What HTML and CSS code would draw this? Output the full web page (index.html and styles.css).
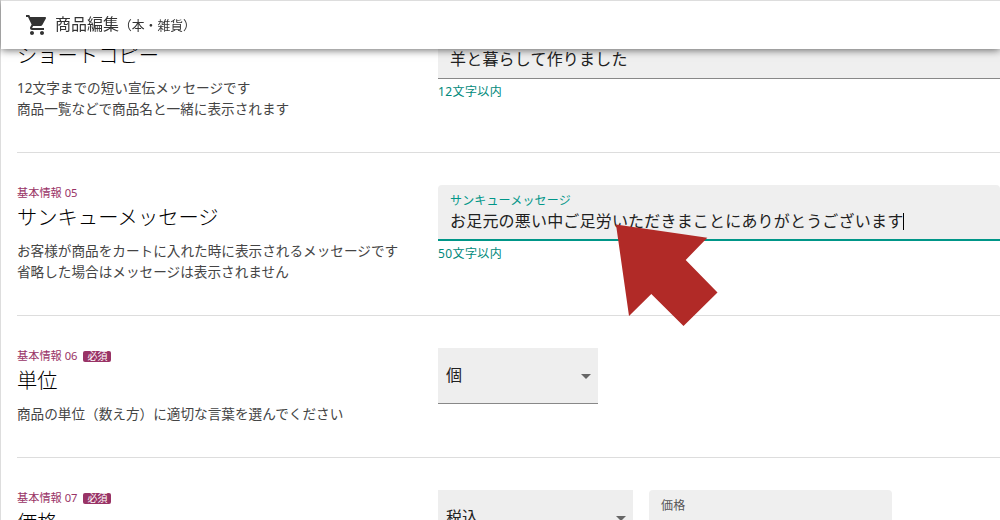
FILE: index.html
```html
<!DOCTYPE html>
<html lang="ja">
<head>
    <meta charset="UTF-8">
    <meta name="viewport" content="width=device-width, initial-scale=1.0">
    <title>商品編集</title>
    <link rel="stylesheet" href="styles.css">
</head>
<body>
    <header class="header">
        <svg class="cart-icon" viewBox="0 0 24 24" width="24" height="24">
            <path d="M7 18c-1.1 0-1.99.9-1.99 2S5.9 22 7 22s2-.9 2-2-.9-2-2-2zM1 2v2h2l3.6 7.59-1.35 2.45c-.16.28-.25.61-.25.96 0 1.1.9 2 2 2h12v-2H7.42c-.14 0-.25-.11-.25-.25l.03-.12.9-1.63h7.45c.75 0 1.41-.41 1.75-1.03l3.58-6.49c.08-.14.12-.31.12-.48 0-.55-.45-1-1-1H5.21l-.94-2H1zm16 16c-1.1 0-1.99.9-1.99 2s.89 2 1.99 2 2-.9 2-2-.9-2-2-2z"/>
        </svg>
        <h1>商品編集<small>（本・雑貨）</small></h1>
    </header>

    <main class="container">
        <section class="item first">
            <div class="info">
                <h2>ショートコピー</h2>
                <p class="description">12文字までの短い宣伝メッセージです<br>商品一覧などで商品名と一緒に表示されます</p>
            </div>
            <div class="form">
                <div class="text-field">
                    <span class="value">羊と暮らして作りました</span>
                </div>
                <p class="helper">12文字以内</p>
            </div>
        </section>

        <section class="item">
            <div class="info">
                <p class="number">基本情報 05</p>
                <h2>サンキューメッセージ</h2>
                <p class="description">お客様が商品をカートに入れた時に表示されるメッセージです<br>省略した場合はメッセージは表示されません</p>
            </div>
            <div class="form">
                <div class="text-field focused">
                    <span class="label">サンキューメッセージ</span>
                    <span class="value">お足元の悪い中ご足労いただきまことにありがとうございます<i class="caret"></i></span>
                </div>
                <p class="helper">50文字以内</p>
                <svg class="pointer" viewBox="0 0 102 102" width="102" height="102">
                    <path d="M0 .5L91.3 13.7 69.7 36 101.5 68.5 67.5 102 35.3 70 13 92z"/>
                </svg>
            </div>
        </section>

        <section class="item">
            <div class="info">
                <p class="number">基本情報 06<span class="required">必須</span></p>
                <h2>単位</h2>
                <p class="description">商品の単位（数え方）に適切な言葉を選んでください</p>
            </div>
            <div class="form row">
                <div class="select unit">個<i class="arrow"></i></div>
            </div>
        </section>

        <section class="item">
            <div class="info">
                <p class="number">基本情報 07<span class="required">必須</span></p>
                <h2>価格</h2>
            </div>
            <div class="form row">
                <div class="select tax">税込<i class="arrow"></i></div>
                <div class="text-field price">
                    <span class="label">価格</span>
                </div>
            </div>
        </section>
    </main>
</body>
</html>
```
FILE: styles.css
```css
* {
    margin: 0;
    padding: 0;
    box-sizing: border-box;
}

body {
    height: 100vh;
    overflow: hidden;
    background: white;
    border-left: 1px solid #ddd;
    color: #212121;
    font-family: "Noto Sans", "Noto Sans CJK JP", sans-serif;
}

.header {
    position: fixed;
    top: 0;
    left: 1px;
    right: 0;
    height: 49px;
    padding: 0 0 0 24px;
    display: flex;
    align-items: center;
    gap: 6px;
    background: white;
    border-top: 1px solid #ddd;
    box-shadow: 0 1px 8px rgba(0, 0, 0, 0.6);
    z-index: 10;
}

.cart-icon {
    fill: #333;
}

.header h1 {
    padding-bottom: 1px;
    font-size: 16px;
    font-weight: normal;
    line-height: 23px;
    color: #333;
}

.header small {
    font-size: 12.8px;
}

.container {
    padding: 1px 0 0 16px;
}

.item {
    display: flex;
    padding: 32px 0;
    border-bottom: 1px solid #ddd;
}

.info {
    width: 421px;
    flex-shrink: 0;
}

.number {
    display: flex;
    align-items: center;
    height: 16px;
    font-size: 11.2px;
    line-height: 16px;
    color: #993366;
}

.required {
    margin-left: 6px;
    padding: 0 4px;
    height: 11px;
    border-radius: 2px;
    background: #993366;
    color: white;
    font-size: 10px;
    line-height: 10px;
}

h2 {
    height: 39px;
    font-size: 20.3px;
    font-weight: 300;
    line-height: 32px;
    color: #000;
}

.description {
    padding-bottom: 1px;
    font-size: 13.63px;
    line-height: 21px;
    color: #444;
}

.form {
    flex: 1;
    position: relative;
}

.form.row {
    display: flex;
    align-items: flex-start;
    gap: 16px;
}

.text-field {
    height: 56px;
    padding: 7px 12px 0;
    border-bottom: 1px solid #888;
    border-radius: 4px 4px 0 0;
    background: #efefef;
    white-space: nowrap;
}

.label {
    display: block;
    font-size: 12px;
    line-height: 17px;
    letter-spacing: 0.15px;
    color: #555;
}

.value {
    display: flex;
    align-items: center;
    font-size: 16px;
    line-height: 24px;
    letter-spacing: 0.19px;
}

.text-field.focused {
    border-bottom: 2px solid #009688;
}

.focused .label {
    color: #009688;
}

.caret {
    width: 1px;
    height: 17px;
    background: #000;
}

.helper {
    margin-top: 3px;
    font-size: 12px;
    line-height: 20px;
    letter-spacing: 0.4px;
    color: #00897b;
}

/* first item is half hidden under the header */
.first {
    padding-top: 37px;
}

.first h2 {
    line-height: 34px;
}

.first .text-field {
    height: 41px;
    padding-top: 9px;
    border-radius: 0;
}

/* points at the message field */
.pointer {
    position: absolute;
    top: 39px;
    left: 178px;
    fill: #b12a27;
}

.select {
    display: flex;
    align-items: center;
    justify-content: space-between;
    height: 56px;
    padding: 0 7px 4px 8px;
    border-bottom: 1px solid #888;
    background: #eee;
    font-size: 16px;
}

.select.unit {
    width: 160px;
}

.select.tax {
    width: 195px;
}

.arrow {
    margin-top: 5px;
    border: 5px solid transparent;
    border-top-color: #666;
    border-bottom: 0;
}

.price {
    width: 243px;
}
```
